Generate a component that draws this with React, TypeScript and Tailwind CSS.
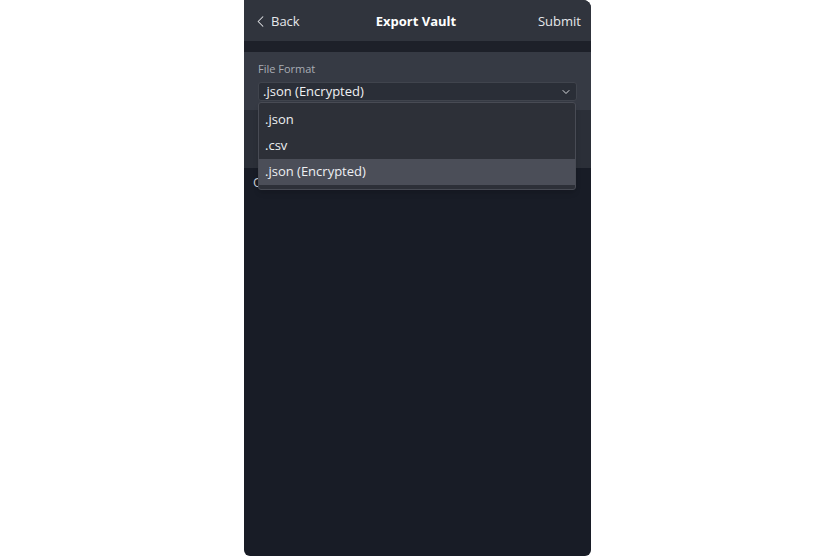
import type { FC } from "react";
import { ChevronDown, ChevronLeft } from "lucide-react";

const options = [".json", ".csv", ".json (Encrypted)"];

const FormatMenu: FC = () => {
  return (
    <div className="absolute left-[14px] top-[50px] z-10 w-[318px] rounded-[3px] border border-[#484b54] bg-[#2d3038] py-[4px] shadow-md">
      {options.map((opt) => (
        <div
          key={opt}
          className={
            opt === ".json (Encrypted)"
              ? "flex h-[26px] items-center bg-[#4b4e58] px-[6px] text-[13px] text-[#eef0f3]"
              : "flex h-[26px] items-center px-[6px] text-[13px] text-[#eef0f3]"
          }
        >
          {opt}
        </div>
      ))}
    </div>
  );
};

export default function App() {
  return (
    <div
      className="flex h-[556px] w-full justify-center bg-white"
      style={{ fontFamily: '"Open Sans", "Noto Sans", sans-serif' }}
    >
      <div className="flex h-full w-[347px] flex-col overflow-hidden rounded-tr-[8px] rounded-b-[6px] bg-[#181c26]">
        <header className="grid h-[41px] shrink-0 grid-cols-3 items-center bg-[#30343d] pl-[7px] pr-[10px] pt-[2px] text-[13px] text-[#e6e8eb]">
          <div className="flex items-center gap-[1px]">
            <ChevronLeft className="size-[19px]" strokeWidth={1.3} />
            <span>Back</span>
          </div>
          <div className="text-center font-bold text-white">Export Vault</div>
          <div className="text-right">Submit</div>
        </header>

        <div className="h-[11px] shrink-0 bg-[#1d2029]" />

        <section className="relative h-[58px] shrink-0 bg-[#363a44] px-[14px] pt-[9px]">
          <div className="text-[11px] leading-[16px] text-[#a9adb4]">File Format</div>
          <div className="mt-[5px] flex h-[19px] items-center justify-between rounded-[3px] border border-[#40444d] bg-[#2a2e37] pl-[4px] pr-[4px] text-[13px] text-[#f0f1f3]">
            <span>.json (Encrypted)</span>
            <ChevronDown className="size-[12px] text-[#d8dade]" strokeWidth={2} />
          </div>
          <FormatMenu />
        </section>

        <section className="h-[58px] shrink-0 bg-[#2b2f38]" />

        <div className="px-[9px] pt-[5px] text-[13px] text-[#c9ccd2]">Options</div>
      </div>
    </div>
  );
}
